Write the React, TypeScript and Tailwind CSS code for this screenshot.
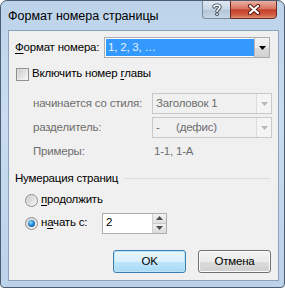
import React from "react";

const font = { fontFamily: '"Liberation Sans", Arial, sans-serif' };

function Arrow({ color = "#000" }: { color?: string }) {
  return (
    <svg width="7" height="4" viewBox="0 0 7 4">
      <polygon points="0,0 7,0 3.5,4" fill={color} />
    </svg>
  );
}

function Combo({
  children,
  w,
  disabled,
}: {
  children: React.ReactNode;
  w: string;
  disabled?: boolean;
}) {
  return (
    <div
      className={`${w} shrink-0 h-[21px] flex border ${
        disabled ? "border-[#c8c8c8] bg-[#f0f0f0]" : "border-[#abadb3] bg-white"
      }`}
    >
      <div className="flex-1 flex items-center whitespace-nowrap">{children}</div>
      <div
        className={`w-[15px] flex items-center justify-center border-l ${
          disabled
            ? "border-[#dcdcdc] bg-[#f4f4f4]"
            : "border-[#b5b5b5] bg-[linear-gradient(180deg,#f4f4f4_0%,#e9e9e9_50%,#dcdcdc_51%,#d0d0d0_100%)]"
        }`}
      >
        <Arrow color={disabled ? "#b8b8b8" : "#000"} />
      </div>
    </div>
  );
}

function Button({ children, def }: { children: React.ReactNode; def?: boolean }) {
  return (
    <div
      className={`w-[73px] h-[23px] rounded-[3px] border flex items-center justify-center text-black ${
        def
          ? "border-[#3c7fb1] bg-[linear-gradient(180deg,#eaf6fd_0%,#d9f0fc_50%,#bee6fd_51%,#a7d9f5_100%)] shadow-[inset_0_0_0_1px_#bde4f5]"
          : "border-[#707070] bg-[linear-gradient(180deg,#f2f2f2_0%,#ebebeb_50%,#dddddd_51%,#cfcfcf_100%)] shadow-[inset_0_0_0_1px_#fcfcfc]"
      }`}
    >
      {children}
    </div>
  );
}

function Radio({ checked }: { checked?: boolean }) {
  return (
    <div className="w-[13px] h-[13px] shrink-0 rounded-full border border-[#8e8f8f] bg-[linear-gradient(135deg,#d6d6d6_0%,#f4f4f4_100%)] flex items-center justify-center">
      {checked ? (
        <div className="w-[7px] h-[7px] rounded-full bg-[radial-gradient(circle_at_40%_35%,#8be0ff_0%,#2a8ad4_45%,#0d3a73_100%)]" />
      ) : (
        <div className="w-[9px] h-[9px] rounded-full bg-[linear-gradient(135deg,#cbcbcb_0%,#f5f5f5_100%)]" />
      )}
    </div>
  );
}

export default function App() {
  return (
    <div
      style={font}
      className="w-[285px] h-[288px] rounded-t-[7px] rounded-b-[4px] border border-[#4d5d6d] bg-[linear-gradient(180deg,#bcd3ea_0%,#c9dcf0_40%,#bcd2ea_100%)] flex flex-col text-[11.5px] tracking-[-0.2px] text-black overflow-hidden whitespace-nowrap"
    >
      {/* title bar */}
      <div className="h-[29px] flex shrink-0">
        <div className="flex-1 pl-[7px] pt-[7px] text-[12.5px] tracking-normal text-black leading-[16px]">
          Формат номера страницы
        </div>
        <div className="flex h-[19px] mt-[-1px] mr-[7px]">
          <div className="w-[28px] h-[19px] rounded-bl-[4px] border border-[#7a8a9c] border-r-0 bg-[linear-gradient(180deg,#dfe8f1_0%,#c7d6e5_50%,#b0c3d7_51%,#c9d8e6_100%)] flex items-center justify-center">
            <svg width="10" height="13" viewBox="0 0 10 13">
              <path
                d="M2 4 C2 1.5 8 1.5 8 4 C8 6 5 6 5 8.5"
                fill="none"
                stroke="#3a4654"
                strokeWidth="3.4"
                strokeLinecap="round"
              />
              <circle cx="5" cy="11.2" r="1.8" fill="#3a4654" />
              <path
                d="M2 4 C2 1.5 8 1.5 8 4 C8 6 5 6 5 8.5"
                fill="none"
                stroke="#fff"
                strokeWidth="1.6"
                strokeLinecap="round"
              />
              <circle cx="5" cy="11.2" r="0.9" fill="#fff" />
            </svg>
          </div>
          <div className="w-[47px] h-[19px] rounded-br-[4px] border border-[#6e2a20] bg-[linear-gradient(180deg,#e8b0a3_0%,#d77560_45%,#c4402a_52%,#cf5a40_80%,#e09070_100%)] flex items-center justify-center">
            <svg width="14" height="11" viewBox="0 0 14 11">
              <path
                d="M3 2 L11 9 M11 2 L3 9"
                stroke="#5a1d14"
                strokeWidth="4.2"
                strokeLinecap="round"
              />
              <path
                d="M3 2 L11 9 M11 2 L3 9"
                stroke="#fff"
                strokeWidth="2.2"
                strokeLinecap="round"
              />
            </svg>
          </div>
        </div>
      </div>

      {/* client */}
      <div className="ml-[7px] w-[271px] h-[251px] border border-[#8da2b8] bg-[#f0f0f0] pl-[6px] pt-[6px] flex flex-col">
        {/* row 1 */}
        <div className="h-[21px] flex items-center">
          <div className="w-[89px] shrink-0">
            <span className="underline underline-offset-2">Ф</span>ормат номера:
          </div>
          <Combo w="w-[166px]">
            <div className="ml-[1px] h-[17px] w-[148px] bg-[#3399ff] text-[#e6f0ff] flex items-center pl-[2px]">
              1, 2, 3, …
            </div>
          </Combo>
        </div>

        {/* checkbox */}
        <div className="h-[20px] mt-[6px] flex items-center pl-[1px]">
          <div className="w-[13px] h-[13px] shrink-0 border border-[#8e8f8f] bg-[linear-gradient(135deg,#dcdcdc_0%,#f6f6f6_100%)] flex items-center justify-center">
            <div className="w-[9px] h-[9px] bg-[linear-gradient(135deg,#cfcfcf_0%,#f2f2f2_100%)]" />
          </div>
          <div className="ml-[3px]">
            Включить номер <span className="underline underline-offset-2">г</span>лавы
          </div>
        </div>

        {/* disabled rows */}
        <div className="mt-[9px] h-[21px] flex items-center pl-[18px] text-[#6d6d6d]">
          <div className="w-[119px] shrink-0">начинается со стиля:</div>
          <Combo w="w-[120px]" disabled>
            <span className="pl-[3px]">Заголовок 1</span>
          </Combo>
        </div>
        <div className="mt-[3px] h-[21px] flex items-center pl-[18px] text-[#6d6d6d]">
          <div className="w-[119px] shrink-0">разделитель:</div>
          <Combo w="w-[120px]" disabled>
            <span className="pl-[3px] w-[23px]">-</span>
            <span>(дефис)</span>
          </Combo>
        </div>
        <div className="mt-[4px] h-[20px] flex items-center pl-[18px] text-[#6d6d6d]">
          <div className="w-[121px] shrink-0">Примеры:</div>
          <div>1-1, 1-A</div>
        </div>

        {/* group */}
        <div className="mt-[9px] h-[16px] flex items-center pr-[8px]">
          <div>Нумерация страниц</div>
          <div className="flex-1 ml-[6px] h-[2px] border-t border-[#d5dfe5] border-b-white" />
        </div>
        <div className="mt-[3px] h-[20px] flex items-center pl-[10px]">
          <Radio />
          <div className="ml-[3px]">
            <span className="underline underline-offset-2">п</span>родолжить
          </div>
        </div>
        <div className="mt-[3px] h-[20px] flex items-center pl-[10px]">
          <Radio checked />
          <div className="ml-[3px] w-[61px] shrink-0">
            н<span className="underline underline-offset-2">а</span>чать с:
          </div>
          <div className="w-[65px] h-[21px] border border-[#abadb3] bg-white flex">
            <div className="flex-1 pl-[3px] flex items-center">2</div>
            <div className="w-[14px] flex flex-col border-l border-[#d0d0d0]">
              <div className="flex-1 flex items-center justify-center bg-[linear-gradient(180deg,#f4f4f4_0%,#dedede_100%)] border-b border-[#c8c8c8]">
                <svg width="7" height="4" viewBox="0 0 7 4">
                  <polygon points="0,4 7,4 3.5,0" fill="#4d4d4d" />
                </svg>
              </div>
              <div className="flex-1 flex items-center justify-center bg-[linear-gradient(180deg,#f0f0f0_0%,#dadada_100%)]">
                <svg width="7" height="4" viewBox="0 0 7 4">
                  <polygon points="0,0 7,0 3.5,4" fill="#4d4d4d" />
                </svg>
              </div>
            </div>
          </div>
        </div>

        {/* buttons */}
        <div className="mt-[17px] flex pl-[98px] gap-[12px]">
          <Button def>OK</Button>
          <Button>Отмена</Button>
        </div>
      </div>
    </div>
  );
}
